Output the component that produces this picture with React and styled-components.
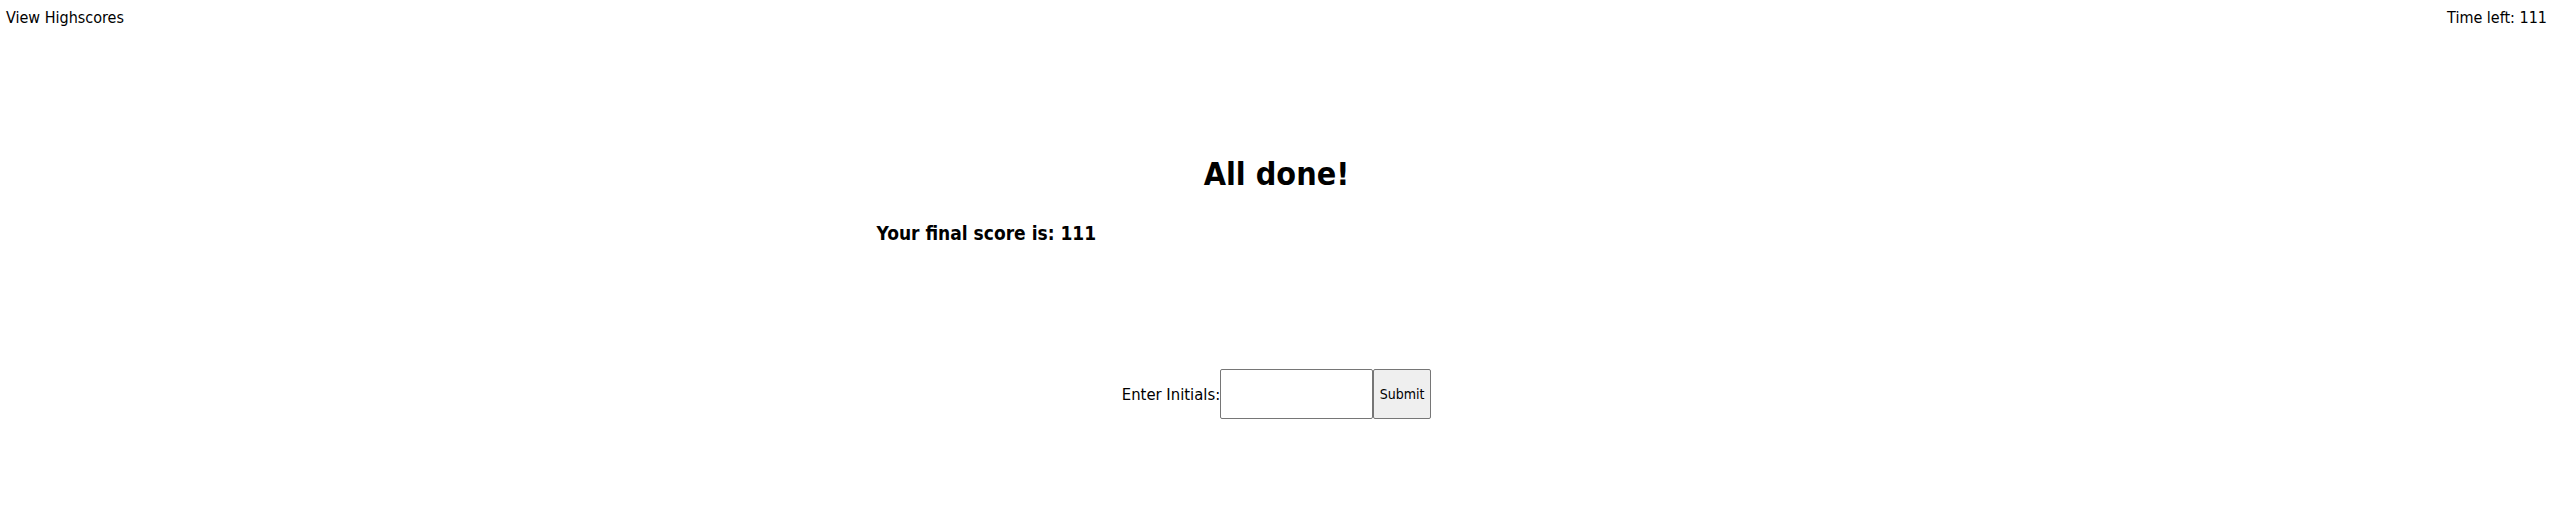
import React, { useState } from 'react';
import styled, { createGlobalStyle } from 'styled-components';

// * =================================
// *       Quiz - All done page
// * =================================

const GlobalStyle = createGlobalStyle`
  body {
    margin: 0;
    font-family: "DejaVu Sans Condensed", "DejaVu Sans", sans-serif;
    color: #000;
    background: #fff;
  }
`;

const App = () => {
  const [initials, setInitials] = useState('');
  const timeLeft = 111;

  const onInitialsHandler = (event) => {
    setInitials(event.target.value);
  };

  const onSubmitHandler = (event) => {
    event.preventDefault();
  };

  return (
    <Page>
      <GlobalStyle />
      <TopBar>
        <HighscoreLink>View Highscores</HighscoreLink>
        <Timer>Time left: {timeLeft}</Timer>
      </TopBar>
      <Card>
        <Title>All done!</Title>
        <FinalScore>Your final score is: {timeLeft}</FinalScore>
      </Card>
      <InitialsForm onSubmit={onSubmitHandler}>
        <InitialsLabel>Enter Initials:</InitialsLabel>
        <InitialsInput type="text" value={initials} onChange={onInitialsHandler} />
        <SubmitBtn type="submit">Submit</SubmitBtn>
      </InitialsForm>
    </Page>
  );
};

//=================================
//       Styled-Component
//=================================

const Page = styled.div`
  display: flex;
  flex-direction: column;
  min-height: 521px;
`;

const TopBar = styled.header`
  display: flex;
  justify-content: space-between;
  align-items: center;
  padding: 8px 6px 0 6px;
  font-size: 16px;
  line-height: 19px;
`;

const HighscoreLink = styled.span`
  cursor: pointer;
`;

const Timer = styled.span``;

const Card = styled.main`
  width: 800px;
  margin: 127px auto 0;
  display: flex;
  flex-direction: column;
`;

const Title = styled.h1`
  margin: 0;
  text-align: center;
  font-size: 32px;
  line-height: 40px;
  font-weight: 700;
`;

const FinalScore = styled.h3`
  margin: 28px 0 0;
  font-size: 19px;
  line-height: 22px;
  font-weight: 700;
`;

const InitialsForm = styled.form`
  display: flex;
  justify-content: center;
  align-items: center;
  margin-top: 125px;
`;

const InitialsLabel = styled.label`
  font-size: 16.5px;
`;

const InitialsInput = styled.input`
  box-sizing: border-box;
  width: 153px;
  height: 50px;
  margin: 0;
  border: 1px solid #767676;
  border-radius: 2px;
  padding: 1px 2px;
  font-size: 16px;
  &:focus {
    outline: none;
  }
`;

const SubmitBtn = styled.button`
  box-sizing: border-box;
  width: 58px;
  height: 50px;
  margin: 0;
  padding: 0;
  background: #efefef;
  border: 1px solid #767676;
  border-radius: 2px;
  font-family: inherit;
  font-size: 14px;
  color: #000;
`;

export default App;
